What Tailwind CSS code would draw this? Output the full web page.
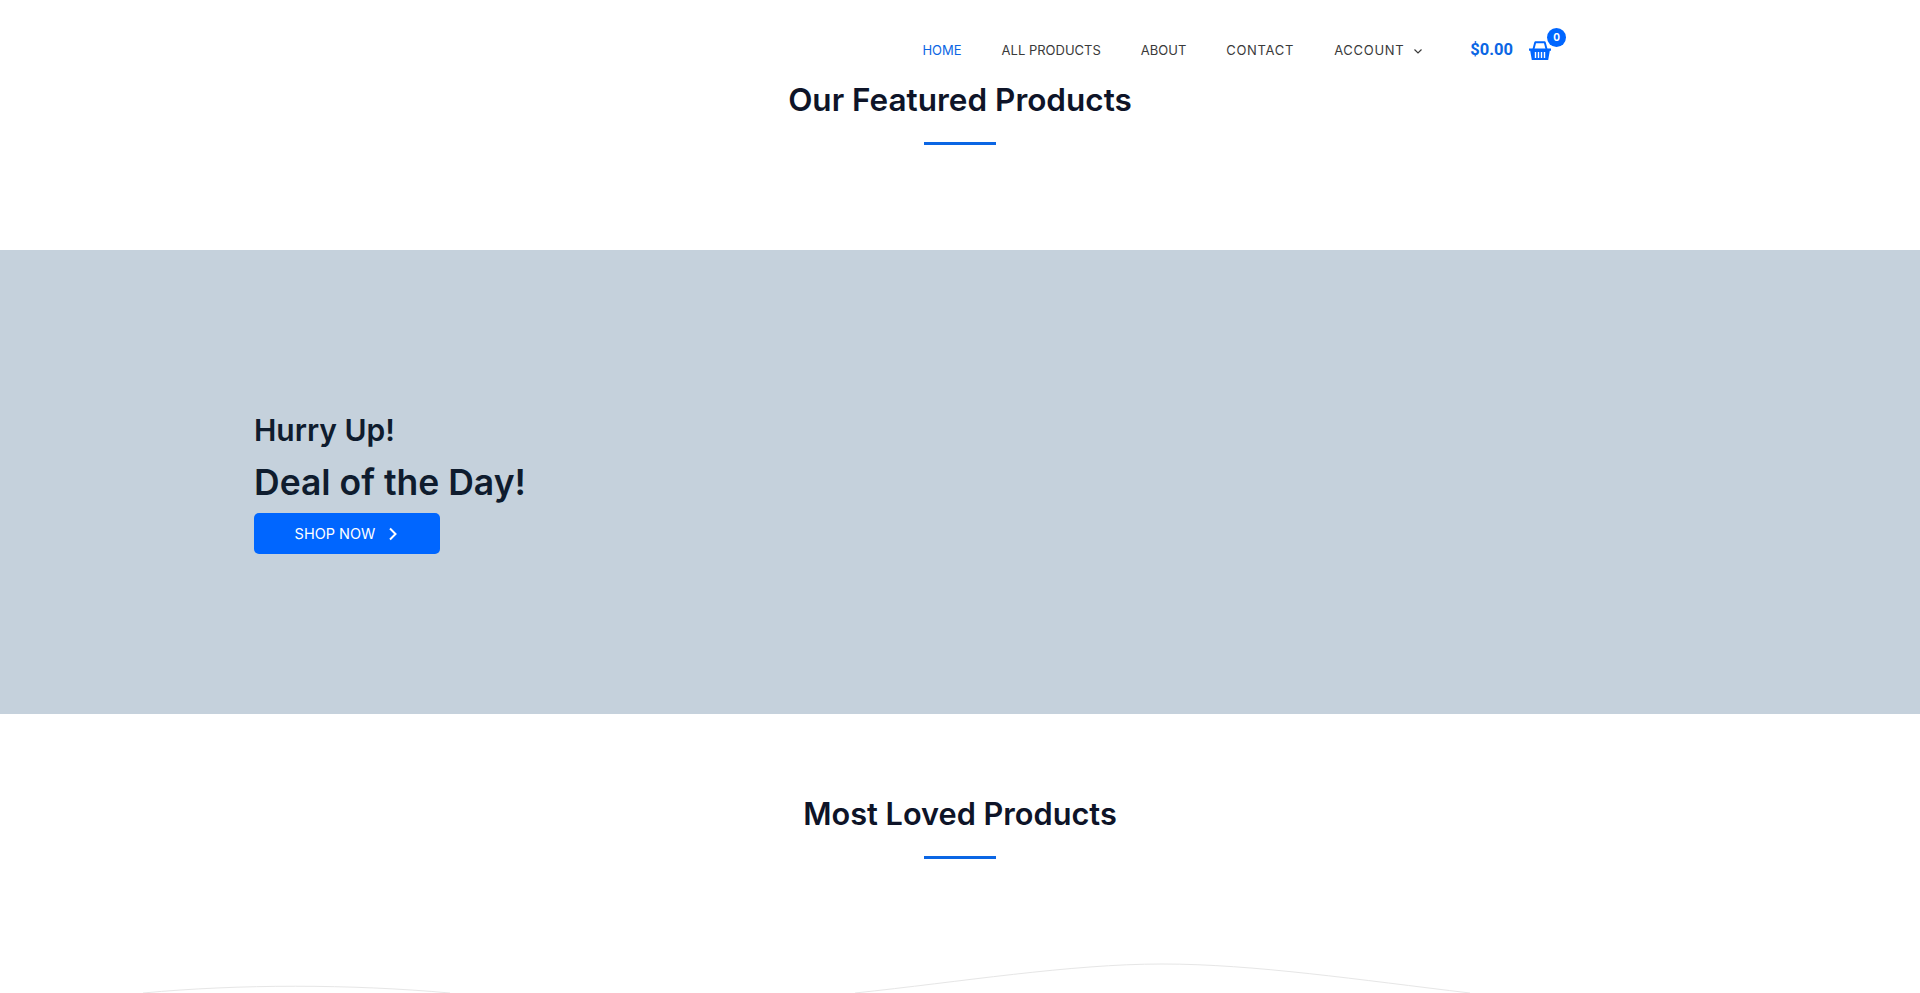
<!DOCTYPE html>
<html lang="en">

<head>
  <meta charset="UTF-8">
  <meta name="viewport" content="width=device-width, initial-scale=1.0">
  <title>Store</title>
  <script src="https://cdn.jsdelivr.net/npm/@tailwindcss/browser@4"></script>
</head>

<body class="bg-white h-[993px] overflow-hidden font-['Inter',sans-serif] text-[#0e1428]">
  <!-- header -->
  <header class="h-[80px] flex justify-end items-center pr-[368px] pt-[20px]">
    <nav class="flex items-center gap-[40px] mt-[2px] text-[13px] text-[#3a3a3a]">
      <a href="#" class="text-[#0b66e4]">HOME</a>
      <a href="#">ALL PRODUCTS</a>
      <a href="#">ABOUT</a>
      <a href="#" class="tracking-[0.7px]">CONTACT</a>
      <a href="#" class="flex items-center gap-[9px] tracking-[0.7px]">ACCOUNT
        <svg width="10" height="10" viewBox="0 0 10 10" fill="none" stroke="#3a3a3a" stroke-width="1.2"><path d="M1.500 3.500 5 7l3.500-3.500" /></svg>
      </a>
    </nav>
    <span class="ml-[47px] font-['Roboto',sans-serif] text-[16.500px] font-bold text-[#0b66e4]">$0.00</span>
    <div class="relative ml-[15px] w-[24px] h-[24px]">
      <svg width="24" height="24" viewBox="0 0 24 24" fill="#0066ff">
        <path d="M1 10.500h22v2.200h-1.200L20.200 22H3.800L2.200 12.700H1z" />
        <path d="M4.500 11 6.200 4.500C6.400 3.700 7 3.200 8 3.200h8c1 0 1.600.5 1.800 1.300L19.500 11h-2L16 5.200H8L6.500 11z" />
        <path d="M7.500 14v6M10.500 14v6M13.500 14v6M16.500 14v6" stroke="#fff" stroke-width="1.400" />
      </svg>
      <span class="absolute -top-[10px] -right-[14px] w-[19px] h-[19px] rounded-full bg-[#0066ff] text-white text-[10px] font-bold flex items-center justify-center">0</span>
    </div>
  </header>

  <section class="h-[170px] flex flex-col items-center">
    <h2 class="text-[31.500px] leading-[40px] font-semibold">Our Featured Products</h2>
    <div class="w-[72px] h-[3px] shrink-0 bg-[#0b66e4] mt-[22px]"></div>
  </section>

  <!-- deal banner -->
  <section class="h-[464px] bg-[#c5d1dc] flex flex-col justify-center pl-[254px] pb-[2px]">
    <h3 class="text-[30px] leading-[44px] font-semibold text-[#0f1c2e]">Hurry Up!</h3>
    <h2 class="text-[35.500px] leading-[50px] font-semibold text-[#0f1c2e] mt-[6px]">Deal of the Day!</h2>
    <a href="#" class="mt-[5px] w-[186px] h-[41px] bg-[#0066ff] rounded-[5px] flex items-center justify-center gap-[12px] text-white text-[14.500px]">SHOP NOW
      <svg width="12" height="14" viewBox="0 0 12 14" fill="none" stroke="#fff" stroke-width="2"><path d="m3 1.500 5.500 5.500L3 12.500" /></svg>
    </a>
  </section>

  <section class="h-[279px] pt-[80px] flex flex-col items-center">
    <h2 class="text-[30.700px] leading-[40px] font-semibold">Most Loved Products</h2>
    <div class="w-[72px] h-[3px] shrink-0 bg-[#0b66e4] mt-[22px]"></div>
    <!-- tops of the product images -->
    <svg class="mt-[101px] shrink-0" width="1920" height="33" viewBox="0 0 1920 33" fill="none" stroke="#e6e6e6">
      <path d="M143 33C240 24 350 24 450 33" />
      <path d="M855 33C960 22 1070 4 1162 4C1254 4 1360 20 1470 33" />
    </svg>
  </section>
</body>

</html>
